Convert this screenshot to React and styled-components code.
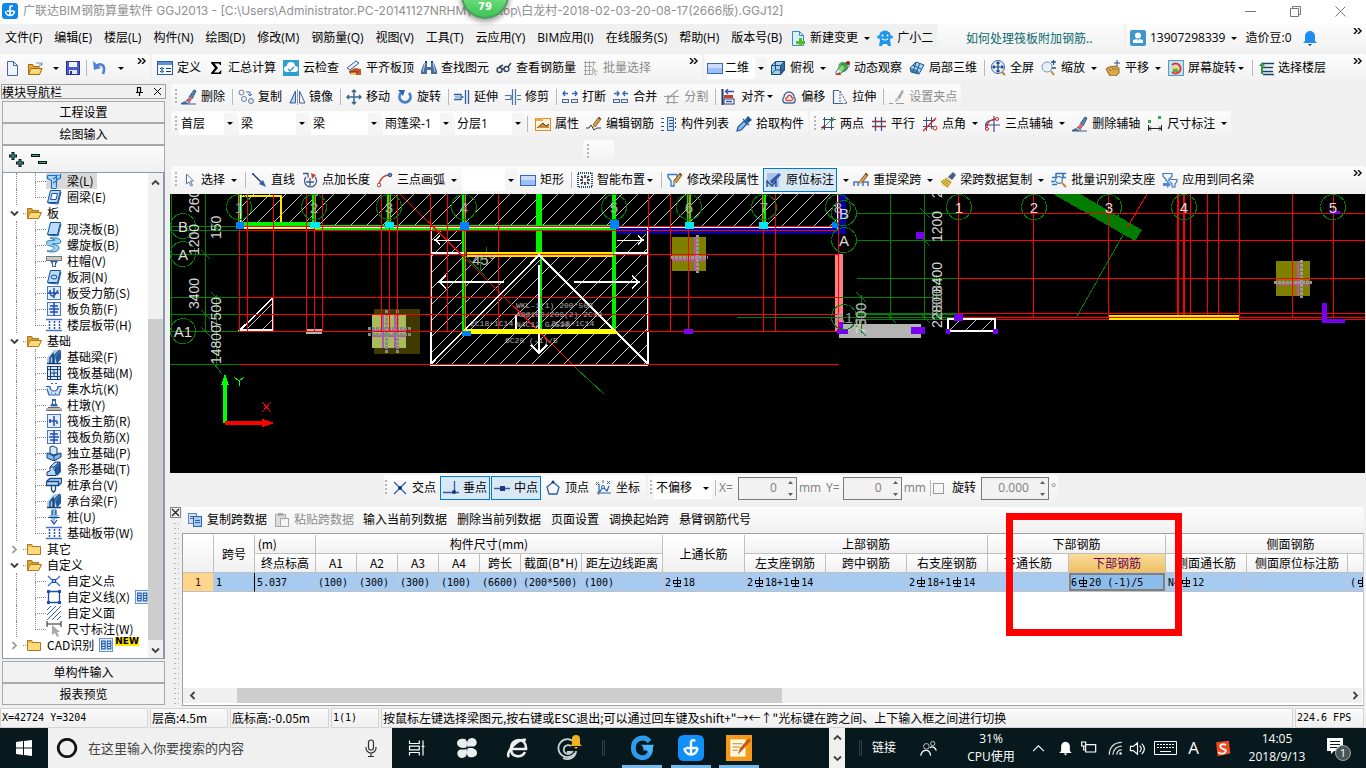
import React from "react";
import styled, { createGlobalStyle, css } from "styled-components";

const UI = `"Open Sans", "Noto Sans CJK SC", sans-serif`;
const TITLE = `Inter, "Noto Sans CJK SC", sans-serif`;
const SONG = `"Noto Sans CJK SC", sans-serif`;
const MONO = `"DejaVu Sans Mono", "Noto Sans CJK SC", monospace`;

const Global = createGlobalStyle`
  * { box-sizing: border-box; }
  body { margin: 0; background: #f0f0f0; color: #000; font: 12px/16px ${UI}; }
  button, input, select { font: inherit; color: inherit; margin: 0; padding: 0; border: 0; background: none; }
  ul { list-style: none; margin: 0; padding: 0; }
  a { color: inherit; text-decoration: none; }
`;

/* ---------- icons ---------- */

const L = (d, c = "#2a4d8f", w = 1, extra = {}) => <path d={d} fill="none" stroke={c} strokeWidth={w} {...extra} />;
const F = (d, c = "#2a4d8f") => <path d={d} fill={c} />;
const R = (x, y, w, h, f, s) => <rect x={x} y={y} width={w} height={h} fill={f} stroke={s} />;
const C = (x, y, r, f, s) => <circle cx={x} cy={y} r={r} fill={f} stroke={s} />;
const brush = (g) => (
  <>
    {F("M8 8l5-7 2 1-4 8z", g ? "#aaa" : "#5b7fb0")}
    {F("M8 8l3 2-2 3-4-1z", g ? "#ccc" : "#e05a6a")}
    {F("M5 11l4 3-3 1-4-1z", g ? "#bbb" : "#dfe6fa")}
    {F("M0 14l4-2 4 3H0z", g ? "#bbb" : "#4a6fa4")}
    {L("M0 15h15M8 8l5-7 2 1-4 8M5 11l4 3", g ? "#999" : "#3c5c86")}
  </>
);
const pencil = <>{F("M7 9l6-8 2 2-6 8-3 1z", "#dca04a")}{F("M12 2l1-1 2 2-1 1z", "#7a4a2a")}{L("M7 9l6-8 2 2-6 8", "#7a5a2a")}</>;
const slab = <>{F("M4 1h11l-3 13H1z", "#b9dcff")}{L("M4.500 1.500h10l-3 12h-10z", "#14509c")}{L("M2 14l10 1 3-12", "#14509c")}</>;
const mesh = (inner) => <>{R(1.5, 1.5, 13, 13, "#e3efff", "#4a74c8")}{L(inner, "#1f4fae", 1.500)}</>;
const beam = <>{F("M1 14V9l7-8h5v8l-5 5z", "#a8cdf2")}{F("M9 8l6-7v9l-4 5z", "#1e5a9c")}{L("M1 14.500h14M4 14V9l3-4v9M8 14V7l6-6", "#123f78", 1.300)}</>;

const ICONS = {
  app: <><rect width="16" height="16" rx="3" fill="#0f86ea" />{L("M8 3v9M3.500 8a4.500 4.500 0 0 0 9 0M5 8h7M8 3h3", "#fff", 1.600)}</>,
  newdoc: <>{F("M3 1h7l4 4v11H3z", "#eef4ff")}{L("M3.500 1.500h6l4 4v10h-10zM9.500 1.500v4h4", "#44689e")}</>,
  open: <>{F("M1 4h5l1 2h6v3H4l-3 6z", "#e8a83a")}{F("M4 8h12l-3 7H1z", "#ffd873")}{L("M4 8.500h11l-2.500 6H1.500zM1.500 14V4.500h4l1 2H12", "#9a6a18")}{L("M9 3h4l2 2M15 2v3h-3", "#6f8fb8")}</>,
  save: <>{R(1.5, 1.5, 13, 13, "#4a5bc8", "#26338f")}{R(4, 2, 8, 5, "#eef1ff")}{R(4, 10, 8, 4, "#dfe4f8")}{R(5, 11, 2, 3, "#26338f")}</>,
  undo: <>{L("M4 6c6-4 10 0 7 8", "#4f7fd6", 2.600)}{F("M1 1l1 9 7-2z", "#4f7fd6")}</>,
  define: <>{R(0.5, 1.5, 15, 13, "#f5f9ff", "#2b5ba8")}{R(1, 2, 14, 3, "#5f8fd8")}{L("M3 8.500h4M3 11.500h4M9 8.500h5M9 11.500h5", "#1d3c70")}{R(4, 7, 2, 6, "#5f8fd8")}</>,
  sigma: F("M3 2h10v3h-1l-1-1.500H6.500L10 8l-4 4.500h5l1.500-2h1L13 14H3v-1l4-5-4-5z", "#000"),
  cloud: <>{R(0, 0, 16, 16, "#2f9fd0")}{F("M4 12a3 3 0 0 1 0-6 4 4 0 0 1 8 0 3 3 0 0 1 0 6z", "#fff")}{L("M5 9l2 2 4-4", "#2f9fd0", 1.500)}</>,
  flush: <>{F("M1 8l9-7 3 2-9 7z", "#e8f0ff")}{L("M1 8l9-7 3 2-9 7z", "#3d5f9a")}{F("M3 11l6-3 6 1v6H5z", "#c2542e")}{F("M5 12h5v3H5z", "#ffc44a")}{L("M3 12h9", "#6b2d14")}</>,
  find: <>{F("M3 3h3v4h4V3h3l3 8v3h-6v-4H6v4H0v-3z", "#4a6e9c")}{L("M4 3l-2 9M12 3l2 9", "#b9cfe8")}{R(4, 1, 2, 2, "#203c60")}{R(10, 1, 2, 2, "#203c60")}</>,
  glasses: <>{L("M1 10a2.500 2.500 0 1 0 5 0 2.500 2.500 0 1 0-5 0M8 9a2.500 2.500 0 1 0 5 0 2.500 2.500 0 1 0-5 0M6 9h2M3 7l4-2M12 7l3-4", "#34425c", 1.400)}</>,
  batchG: <>{L("M1 2.500h12M1 6.500h8M1 10.500h7M1 14.500h9M2.500 1v14M6.500 1v14M10.500 1v5", "#a4a4a4")}{F("M9 6l6 6h-3l2 3-2 1-1-3-2 2z", "#c4c4c4")}</>,
  rect: <>{R(0.5, 3.5, 15, 10, "#9cc0f8", "#3d66b8")}{R(1, 4, 14, 4, "#c9defc")}</>,
  cube: <>{F("M1 5l5-4h9v9l-4 5H1z", "#9fd0ee")}{F("M11 5l4-4v9l-4 5z", "#3f6f9c")}{L("M1.500 5.500h9v9h-9zM1.500 5.500l4-4h9l-4 4M10.500 14.500l4-5v-8M5.500 2v8l-4 4M6 10h9", "#214a78")}</>,
  orbit: <>{C(9, 7, 5, "#3fa84a")}{C(7, 8, 3, "#8edc72")}{L("M2 14C0 11 12 0 15 3s-8 12-13 11", "#406a9c")}{F("M1 15l5-3 1 3z", "#c23a2a")}{C(14, 3, 2, "#a02020")}</>,
  local3d: <>{F("M1 8l6-6 8 3-5 9-8-2z", "#a9d4f4")}{F("M1 8l1 4 8 2-1-4z", "#4d86b8")}{L("M1 8l6-6 8 3-5 9-8-2zM4 5l8 4M7 2l-3 10M11 3L7 13", "#1f568c")}</>,
  full: <>{C(8, 7, 6.5, "#e3eeff", "#3c5f98")}{L("M8 2v10M3 7h10M6.500 3.500L8 2l1.500 1.500M6.500 10.500L8 12l1.500-1.500M4.500 5.500L3 7l1.500 1.500M11.500 5.500L13 7l-1.500 1.500", "#1c3c78", 1.200)}{L("M12 12l3 3", "#c08030", 2)}</>,
  zoom: <>{C(6, 7, 5, "#e8f2ff", "#7c94b8")}{L("M10 11l3 4", "#b98a3c", 2)}{L("M10 2h5M12.500 0v5M11 8h4", "#2b4d90", 1.300)}</>,
  pan: <>{F("M1 9l3-2 7-1 3 2v5l-3 3H5z", "#dca64a")}{L("M1 9l3-2 7-1 3 2v5l-3 3H5zM4 9l2 2M7 8l2 2M10 8l1 2", "#8a6222")}{L("M12 0v6M9 3h6", "#2b4d90")}</>,
  screenrot: <>{R(0.5, 0.5, 15, 15, "#bfe2f4", "#5898c0")}{L("M4 5a5 5 0 1 1 0 7", "#e23b2e", 2)}{R(4, 7, 6, 3, "#f0d43a")}{R(5, 9, 5, 3, "#58b04a")}</>,
  floors: <>{L("M4 3.500h12M3 7.500h12M5 11.500h10M5 14.500h11", "#16466a", 1.600)}{F("M1 6l3-4 3 4H5v8H3V6z", "#37924a")}</>,
  brush: brush(false), brushG: brush(true),
  copy: <>{C(3.500, 3.500, 2.500, "none", "#6a7890")}{C(6, 10, 2.500, "none", "#6a7890")}{C(13, 12, 2.500, "#d8e4f8", "#6a7890")}{L("M8 3h4v3M10 5l2 2 2-2", "#3c66b0")}</>,
  mirror: <>{L("M8.500 0v16", "#8a9cba")}{F("M6 2v12H0z", "#b8cff0")}{L("M6.500 2v12H1zM10.500 2v12H16z", "#3f5f96")}</>,
  move: L("M8 1v14M1 8h14M6 3l2-2 2 2M6 13l2 2 2-2M3 6L1 8l2 2M13 6l2 2-2 2", "#3d6596", 1.500),
  rotate: <>{L("M4 4a5.500 5.500 0 1 0 8 0", "#4a7fd0", 2.800)}{F("M1 1l7 0-2 6z", "#2f62b8")}</>,
  extend: <>{L("M0 5.500h7v5H0M9.500 8h-2M11.500 1v14M14.500 1v14", "#2d5c9c", 1.300)}{L("M1 8h6", "#9db8dc", 2)}</>,
  trim: <>{L("M0 6.500h6v4H0M7.500 0v16M10.500 0v16M12 6.500h4M12 10.500h4", "#4a74a8", 1.200)}</>,
  breakI: <>{L("M1 4.500h5M10 4.500h5M3 2L1 4.500 3 7M13 2l2 2.500L13 7", "#3465b8", 1.300)}{R(0.5, 10.5, 6, 3, "#dfe8f6", "#51688c")}{R(9.500, 10.5, 6, 3, "#dfe8f6", "#51688c")}</>,
  merge: <>{L("M1 4.500h5M10 4.500h5M4 2l2 2.500L4 7M12 2l-2 2.500L12 7", "#3465b8", 1.300)}{R(0.5, 10.5, 6, 3, "#dfe8f6", "#51688c")}{R(8.500, 10.5, 6, 3, "#dfe8f6", "#51688c")}</>,
  splitG: <>{L("M0 7.500h15M2 13.500h12M3 10L14 1M4 6v9M10 6v9", "#9c9c9c", 1.200)}</>,
  align: <>{L("M1.500 0v16", "#20386c", 2)}{R(3, 6, 9, 3, "#c83838")}{R(3, 10, 10, 5, "#fff", "#20386c")}{L("M5 2.500h8M7 0L4.500 2.500 7 5M5 12.500h6", "#2a50a8", 1.300)}</>,
  offset: <>{L("M4 14a3.500 3.500 0 0 1-1-6 5 5 0 0 1 10 0 3.500 3.500 0 0 1-1 6z", "#44699a", 1.400)}{L("M5.500 11.500c-2-2 0-3 1-3 0-3 4-3 4 0 2 0 2 2 0 3z", "#d44a4a", 1.300)}</>,
  stretch: <>{L("M7 1.500H1.500v13H10", "#3f628e", 1.200)}{L("M8 2l7 12.500H9M8 2v12", "#3f628e", 1, { strokeDasharray: "2 1" })}</>,
  gripG: <>{F("M8 9l5-8 2 1-4 8z", "#aaa")}{L("M0 14.500h4M7 14.500h8", "#999")}{F("M7 9l3 2-4 2z", "#bbb")}</>,
  prop: <>{R(0.5, 2.5, 15, 12, "#fff3dc", "#e08a24")}{R(1, 2, 7, 3, "#f2a646")}{F("M3 11l5-4 3 3 3-2v4H5z", "#c68a3a")}{L("M2 12l6-5 3 3 3-2", "#5a3a1a")}</>,
  editbar: <>{pencil}{L("M0 12h3l2-3 3 5 3-2h4", "#333")}</>,
  list: <>{R(6.5, 1.5, 6, 13, "#cfe2fb", "#3c68aa")}{L("M0 2.500h3M0 6.500h3M0 10.500h3M0 14.500h3M8 4.500h4M8 7.500h4M8 10.500h4", "#34517e")}{L("M14.500 2v12", "#34517e", 1, { strokeDasharray: "2 2" })}</>,
  picker: <>{F("M9 4l3-4 4 4-4 3z", "#22569c")}{F("M8 5l3 3-6 6-4 1 1-4z", "#8cc0ee")}{L("M8 5l3 3-6 6-4 1 1-4zM7 3l6 6", "#22569c", 1.200)}</>,
  two: <>{L("M3 3.500h13M1 11.500h13M4.500 1v13M11.500 1v13", "#3c4f78")}{L("M1 14L14 1", "#3c9a4a")}{C(4, 11, 1.5, "#a02020")}{C(12, 4, 1.5, "#2a8a2a")}</>,
  para: <>{L("M1 5.500h14M1 10.500h14", "#a03048", 1.300)}{L("M4.500 1v14M10.500 1v14", "#3c5088", 1.300)}</>,
  angle: <>{L("M1 4.500h12M1 10.500h12M4.500 1v14M9.500 1v12", "#3c5088")}{L("M1 15L14 2", "#d02020", 1.300)}{C(13, 12, 2, "#fff", "#d02020")}</>,
  arcaxis: <>{L("M0 13c0-8 4-9 10-9M9 0v16M1 9h14", "#3c5088", 1.200)}{L("M2 14C1 7 5 3 12 3", "#d02020", 1.200)}{C(2, 13, 1.5, "#fff", "#d02020")}{C(12, 3, 1.5, "#fff", "#d02020")}</>,
  dim: <>{F("M1 4h3v3H1zM11 0h3v3h-3z", "#2eae4a")}{L("M1.500 9v6M14.500 9v6M2 12.500h12M4 10.500l-2 2 2 2M12 10.500l2 2-2 2", "#222")}</>,
  cursor: <>{F("M5 1v12l3-3 2 5 2-1-2-5h4z", "#fff")}{L("M5.500 2v10l2.500-2 2 4 1.500-.5-2-4.500h3z", "#5a7398")}</>,
  line: <>{L("M2 2l10 10", "#233a66", 1.400)}{F("M15 15l-7-3 4-4z", "#2b5fb8")}{C(2, 2, 1, "#233a66")}</>,
  addlen: <>{L("M13 5a6 6 0 1 1-9 0", "#3c5c8c", 1.200)}{L("M8 6v8M4 10h8M1 1.500h5v4", "#3c5c8c", 1.300)}{F("M9 1l5 2-4 4z", "#d04030")}</>,
  arc3: <>{L("M2 14C2 8 6 3 13 3", "#c24a3a", 1.500)}{C(2, 13, 1.8, "#fff", "#b03a2a")}{C(13, 3, 1.8, "#5a90d8", "#244a88")}</>,
  smart: <>{R(1, 1, 14, 14, "#fff")}{L("M1 1h14v14H1z", "#244a78", 2, { strokeDasharray: "1 1" })}{L("M4 4l2 2M12 4l-2 2M4 12l2-2M12 12l-2-2M8 3v3M8 10v3M3 8h3M10 8h3", "#111", 1.400)}</>,
  modseg: <>{L("M1 2.500h9v3L7 9v5H4V9L1 5z", "#2b79c8", 1.300)}{pencil}</>,
  inplace: <>{R(1, 1, 12, 14, "#a8c4ea")}{F("M4 9l2 3 9-9-2-2z", "#2a5cae")}{L("M1 15V9l5 5 4-5v6", "#24487c", 1.300)}</>,
  respan: <>{L("M1 14v-4h14v4M5 14v-4M10 14v-4", "#4f78b8", 1.600)}{pencil}</>,
  copyspan: <>{F("M1 9l6-4 5 5-4 6-6-3z", "#e8cc62")}{L("M1 9l7 6M3 8l6 5M5 7l6 4", "#937820")}{F("M8 5l5-5 3 3-4 5z", "#4f5890")}</>,
  batchid: <>{L("M5 1.500h10M1 5.500h4M11 5.500h4M0 9.500h4M1 12.500h5M5 1v5M12 1v5", "#2a78c0", 1.600)}{C(8, 8, 3.500, "#e8f2ff", "#3e618e")}{L("M11 11l4 4", "#b98a3c", 2)}</>,
  applyto: <>{L("M1 1.500h9v3L7 7v2H4V7L1 4.500zM8 7.500h7v2L13 12v3h-3v-3L8 9.500", "#3a79c4", 1.200)}{F("M1 11h4V9l4 3.500L5 16v-2H1z", "#4f86d8")}</>,
  cross: <>{L("M2 2l12 12M14 2L2 14", "#2a5fa8", 1.300)}{C(8, 8, 2, "#1c3c78")}</>,
  perp: <>{L("M0 12.500h16M11.500 1v12", "#2a5fa8", 1.300)}{C(11, 12, 2, "#1c3c78")}</>,
  mid: <>{L("M0 8.500h16", "#2a5fa8", 1.300)}{R(6, 6, 5, 5, "#1c3c78")}</>,
  vertex: <>{L("M8 2l6 5-2 7H4L2 7z", "#2a5fa8", 1.300)}{C(8, 2, 1.5, "#1c3c78")}</>,
  coord: <>{L("M3 4v9h12M3 13l4-6 4 4 2-5", "#2a5fa8", 1.200)}{L("M0 2l3 3M3 2L0 5M11 1l3 3M14 1l-3 3M7 0v3M1 12l2 3", "#567")}{C(7, 7, 1.500, "#fff", "#2a5fa8")}</>,
  copydoc: <>{R(1.5, 1.5, 8, 10, "#cfe0f8", "#5a86bc")}{R(6.5, 4.5, 8, 10, "#a9c9f0", "#2f64a8")}{L("M8 8.500h5M8 10.500h5M3 4.500h3M3 6.500h3", "#2f64a8")}</>,
  paste: <>{R(1.5, 2.5, 10, 12, "#ddd", "#a8a8a8")}{R(4, 1, 5, 3, "#aaa")}{R(6.5, 6.5, 8, 8, "#f4f4f4", "#a8a8a8")}</>,
  newchg: <>{F("M2 1h8l4 4v11H2z", "#d8f0ff")}{L("M2.500 1.500h7l4 4v10h-11zM9.500 1.500v4h4", "#3e88b8")}{F("M9 8h3v3h3v3h-3v2H9v-2H6v-3h3z", "#58b82a")}</>,
  robot: <>{C(8, 6.500, 6, "#1f97e8")}{F("M3 10h10l1 6h-3l-1-2H6l-1 2H2z", "#1f97e8")}{C(5.500, 5.500, 1, "#fff")}{C(10.500, 5.500, 1, "#fff")}{L("M5 8.500c1 2 5 2 6 0", "#fff", 1.200)}{C(1.500, 7, 1.500, "#1f97e8")}{C(14.500, 7, 1.500, "#1f97e8")}</>,
  user: <><rect width="16" height="16" rx="2" fill="#3e97cc" />{C(8, 5.500, 3, "#fff")}{F("M3 13V10l4-1 1 2 1-2 4 1v3z", "#fff")}</>,
  bellb: <>{F("M8 1a5 5 0 0 1 5 5v5l2 2H1l2-2V6a5 5 0 0 1 5-5z", "#1f8cf0")}{F("M6 14h4l-2 2z", "#123a6a")}</>,
  folder: <>{F("M1 3h5l1 2h8v9H1z", "#e9b84c")}{R(1, 6, 14, 8, "#ffd97c")}{L("M1.500 13.500v-10h4l1 2h8v8z", "#a87a22")}</>,
  folderOpen: <>{F("M1 3h5l1 2h6v3H4l-3 6z", "#dba33c")}{F("M4 7h12l-3 7H1z", "#ffd97c")}{L("M1.500 13.500v-10h4l1 2h6v2M4 7.500h11.500l-3 6h-11z", "#a87a22")}</>,
  liang: <>{F("M1 2l4-1h10v4l-4 1v8l-4 1V7L1 6z", "#a9d6fa")}{L("M1.500 2.500h9l4-1M1.500 2.500v3l4 2v8M10.500 2.500v12M14.500 1v4l-4 2M5.500 15.500h5M7 6l3-2M7 10l3-2", "#1f6fc0", 1.200)}</>,
  ring: <>{slab}{F("M6 4h6l-2 7H4z", "#fff")}{L("M6 4.500h5.500l-1.500 6H4.500z", "#14509c")}</>,
  slab,
  spiral: <>{F("M4 1c8-1 13 2 10 5-3 2-7 0-8 1s7 0 7 4-8 5-12 3c3 0 7-1 7-3S0 9 0 6s5-2 9-3z", "#9fd4f4")}{L("M4 1c8-1 13 2 10 5-3 2-7 0-8 1s7 0 7 4-8 5-12 3c3 0 7-1 7-3S0 9 0 6s5-2 9-3z", "#1f78b8")}</>,
  cap: <>{R(0.5, 3.5, 15, 4, "#c8c8c8", "#777")}{F("M4 8h8l-2 3v3H6v-3z", "#2a62b8")}{R(7, 9, 2, 4, "#fff")}</>,
  hole: <>{slab}{L("M5 8a3 2 0 1 0 6 0 3 2 0 1 0-6 0", "#14509c")}</>,
  rebarS: mesh("M2 8h11M4 5c0 8 4 8 8 0M8 3v10"),
  rebarF: mesh("M4 5h8M4 11h8M8 1v14M3 8h10"),
  strip: <>{L("M0 2.500h16M0 13.500h16", "#4a74c8", 1.500)}{L("M3.500 4v8M8.500 4v8M13.500 4v8", "#1f4fae", 1.500, { strokeDasharray: "2 1" })}</>,
  beam,
  raft: <>{R(1.5, 1.5, 13, 13, "#dbe9ff", "#123f78")}{L("M4.500 1v14M11.500 1v14M1 4.500h14M1 11.500h14M8 5v6M5 8h6", "#123f78")}</>,
  pit: <>{F("M0 6h4v4h8V6h4l-3 8H3z", "#cfe2fb")}{L("M0 5.500h4c0 6 8 6 8 0h4M1 8l2 6h10l2-6M5 2.500h2M9 2.500h2M5 12h1M9 12.500h1", "#2a5fb0", 1.200)}</>,
  pier: <>{F("M0 11h3l2-2h6l2 2h3v3H0z", "#bbb")}{L("M0.500 13.500h15M2 10.500h12", "#666")}{F("M6 2h4v4l2 3H4l2-3z", "#2a62b8")}{R(7, 4, 2, 3, "#fff")}</>,
  mainbar: mesh("M8 3v10M3 8h8M4 6v4M11 8v3"),
  indep: <>{F("M1 8l6-2 8 2v4l-7 4-7-3z", "#8ab8e8")}{F("M4 2l3-1 4 2v6l-4 1-3-2z", "#d4e8fc")}{L("M1 8l7 3 7-3M8 11v5M1 8v5l7 3 7-4V8M4 2v6l3 2 4-1V3L7 1z", "#123f78")}</>,
  stripf: <>{F("M1 15v-4l3-1V6l5-5h5l1 9-5 5z", "#b4d6f4")}{F("M9 6l5-5 1 10-4 4-2-4z", "#1e5a9c")}{L("M1 14.500h9v-4L8 9V6H4v4l-3 1zM4 6l5-5h5v9M8 6l5-5", "#123f78")}</>,
  cap2: <>{F("M0 5l3-3h12v4l-2 3H0z", "#b4d6f4")}{L("M0.500 4.500h12v4H.5zM1 4l3-2.500h11.500v4l-3 3M5.500 9v4l2 2.500 2-2.500V9", "#174b8c", 1.300)}</>,
  pile: <>{F("M6 0h4v6h3l-2 4H9l-1 5-2-5H5L3 6h3z", "#8ab8e8")}{L("M6 1v5M10 1v5M2 8.500h12M5 11l3 4 3-4", "#174b8c", 1.200)}</>,
  point: <>{L("M2 3l4 4M14 3l-4 4M2 13l4-4M14 13l-4-4", "#3a70c0", 1.300)}{R(6.500, 6.500, 3, 3, "#9ac6ee", "#1f4fae")}</>,
  cline: <>{L("M2.500 2.500h11v11h-11z", "#1f4fae", 1.300)}{R(1, 1, 3, 3, "#1f4fae")}{R(12, 1, 3, 3, "#1f4fae")}{R(1, 12, 3, 3, "#1f4fae")}{R(12, 12, 3, 3, "#1f4fae")}</>,
  cface: L("M1 5l4-4M1 10l9-9M1 15L15 1M6 15l9-9M11 15l4-4", "#2a5fc0"),
  dimcur: <>{L("M1 0v6M15 0v6M1 3h14", "#222")}{F("M6 4v10l3-2 2 4 2-1-2-4h3z", "#a8a8a8")}</>,
  pages: <>{R(0.5, 0.5, 15, 15, "#e4f0fc", "#5a86bc")}{L("M3 3.500h4v9h-4zM9.500 3.500h4v9h-4zM3 6.500h4M9.500 6.500h4M3 9.500h4M9.500 9.500h4", "#1f5fb0", 1.300)}</>,
};

const Svg = styled.svg`display: block; flex: none;`;
const Icon = ({ n, s = 16 }) => <Svg width={s} height={s} viewBox="0 0 16 16" aria-hidden="true">{ICONS[n]}</Svg>;

const ArrowBox = styled.span`
  flex: none; width: ${(p) => (p.$tight ? 9 : 13)}px; padding-left: ${(p) => (p.$tight ? 2 : 6)}px;
`;
const Tri = () => <Svg width="6" height="3" viewBox="0 0 6 3"><path d="M0 0h6L3 3z" /></Svg>;
const Arrow = ({ tight }) => <ArrowBox $tight={tight}><Tri /></ArrowBox>;
const More = styled.button`align-self: flex-start; margin-left: auto; padding: 4px 4px 0 0; height: 10px;`;
const Chevrons = () => (
  <More aria-label="更多"><Svg width="9" height="6" viewBox="0 0 9 6">{L("M1 0l3 3-3 3M5 0l3 3-3 3", "#000", 1.400)}</Svg></More>
);

/* ---------- toolbars ---------- */

const Bar = styled.div`
  display: flex; height: ${(p) => p.$h || 28}px; margin-bottom: ${(p) => p.$mb ?? 2}px; flex: none; gap: 2px;
  padding-left: ${(p) => p.$pl || 0}px;
`;
const Group = styled.div`
  display: flex; align-items: center; min-width: 0; padding: 0 ${(p) => p.$pr ?? 0}px 0 ${(p) => p.$pl ?? 4}px;
  background: linear-gradient(#fcfcfc, #f1f1f1); border-radius: 3px; overflow: hidden;
  flex: ${(p) => (p.$grow ? "1 1 0" : "none")}; white-space: nowrap;
  width: ${(p) => (p.$w ? p.$w + "px" : "auto")};
`;
const Grip = styled.span`
  flex: none; width: 2px; height: 16px; margin-right: ${(p) => p.$mr ?? 5}px;
  background: repeating-linear-gradient(#b4b4b4 0 2px, transparent 2px 4px);
`;
const Sep = styled.span`flex: none; width: 1px; height: 16px; background: #b8b8b8; margin-right: ${(p) => p.$mr ?? 5}px;`;
const ToolBtn = styled.button`
  display: flex; align-items: center; flex: none; height: 22px; margin-right: ${(p) => p.$mr ?? 7}px; white-space: nowrap;
  & > svg + span { margin-left: 4px; }
  ${(p) => p.disabled && css`color: #8c8c8c;`}
  ${(p) => p.$on && css`
    height: 24px; padding: 0 2px; border: 1px solid #0078d7; background: #d9e8f5; margin-left: -3px; margin-right: ${p.$mr ?? 1}px;
  `}
`;
const Tool = ({ i, t, menu, tight, ...rest }) => (
  <ToolBtn {...rest}>
    {i && <Icon n={i} />}
    {t && <span>{t}</span>}
    {menu && <Arrow tight={tight} />}
  </ToolBtn>
);

const ComboBox = styled.label`
  display: flex; align-items: center; flex: none; height: 22px; width: ${(p) => p.$w}px; margin-right: 3px; background: #fff;
`;
const Select = styled.select`
  appearance: none; flex: 1; min-width: 0; height: 20px; padding-left: 2px; outline: 0;
`;
const DropPart = styled.span`
  display: grid; place-items: center; flex: none; width: 12px; height: 22px; background: ${(p) => (p.$plain ? "#fff" : "#f4f4f4")};
`;
const Combo = ({ v, w, name, plain, icon }) => (
  <ComboBox $w={w}>
    {icon && <Icon n={icon} />}
    <Select aria-label={name} defaultValue={v}><option>{v}</option></Select>
    <DropPart $plain={plain}><Tri /></DropPart>
  </ComboBox>
);

/* ---------- title and menus ---------- */

const Page = styled.div`display: flex; flex-direction: column; min-height: 100vh; overflow: hidden;`;
const TitleBar = styled.header`
  position: relative; display: flex; align-items: center; height: 24px; flex: none; padding: 0 20px 2px 2px;
  background: #fff; color: #8f8f8f; white-space: nowrap; gap: 5px;
`;
const Title = styled.span`flex: 1; min-width: 0; overflow: hidden; font-family: ${TITLE};`;
const Ball = styled.div`
  position: absolute; left: 461px; top: -29px; width: 48px; height: 48px; border-radius: 50%; z-index: 2;
  background: linear-gradient(#6fdc7c 55%, #3cc456); border: 2px solid #4f9a5c; box-shadow: 0 2px 6px #0007;
  color: #fff; font: bold 10px/12px "DejaVu Sans", sans-serif; text-align: center; padding-top: 28px;
`;
const WinBtns = styled.div`display: flex; gap: 34px;`;
const MenuItems = styled.nav`display: flex; align-items: center; flex: none; width: 935px; padding-left: 5px; white-space: nowrap;`;
const MenuBtn = styled.button`flex: none; margin-right: ${(p) => (p.$last ? 8 : 12)}px;`;
const Tip = styled.a`display: block; padding-left: 28px; color: #0a6a6c; font-family: ${SONG};`;

const MENUS = ["文件(F)", "编辑(E)", "楼层(L)", "构件(N)", "绘图(D)", "修改(M)", "钢筋量(Q)", "视图(V)", "工具(T)", "云应用(Y)", "BIM应用(I)", "在线服务(S)", "帮助(H)", "版本号(B)"];

/* ---------- left navigation ---------- */

const Body = styled.div`display: flex; flex: 1; min-height: 0;`;
const Nav = styled.aside`display: flex; flex-direction: column; width: 167px; flex: none; padding: 0 1px 3px; font-family: ${SONG};`;
const NavHead = styled.div`
  display: flex; align-items: center; height: 15px; border: 1px solid #a0a0a0; margin-bottom: 2px; line-height: 13px;
  & > span { flex: 1; }
  svg { margin-right: 3px; }
  svg + svg { margin-left: 6px; }
`;
const NavBtn = styled.button`
  height: 22px; margin: 0 0 0 1px; width: 163px; border: 1px solid #a8a8a8; background: #f2f2f2; flex: none; line-height: 18px;
`;
const NavTools = styled.div`
  display: flex; align-items: center; gap: 6px; height: 27px; margin: 0 0 0 1px; width: 163px; padding-left: 5px; flex: none;
  border: 1px solid #a8a8a8; border-bottom: 0; background: linear-gradient(#fcfcfc, #f0f0f0);
`;
const TreeBox = styled.div`
  display: flex; flex: 1; margin: 0 0 2px 1px; width: 163px; border: 1px solid #8c98a8; border-right-width: 2px; background: #fff; overflow: hidden;
`;
const TreeList = styled.ul`flex: 1; min-width: 0;`;
const Row = styled.li`
  display: flex; align-items: center; height: 16px; white-space: nowrap; overflow: hidden;
  padding-left: ${(p) => (p.$child ? 13 : 7)}px;
`;
const Trunk = styled.span`flex: none; width: 19px; height: 16px; border-left: 1px dotted #888;`;
const Branch = styled.span`
  flex: none; width: 11px; height: 16px;
  &::before { content: ""; display: block; height: 8px; border-left: 1px dotted #888; border-bottom: 1px dotted #888; }
  &::after { content: ""; display: ${(p) => (p.$last ? "none" : "block")}; height: 8px; border-left: 1px dotted #888; }
`;
const Dash = styled.span`flex: none; width: 3px; margin-left: 4px; border-top: 1px dotted #888;`;
const NodeBtn = styled.button`
  display: flex; align-items: center; gap: 5px; height: 16px; padding-right: 3px; line-height: 16px;
  background: ${(p) => (p.$sel ? "#d9d9d9" : "none")};
`;
const NewTag = styled.b`margin-left: -3px; font: bold 9px/9px "DejaVu Sans", sans-serif; background: #ffe600; align-self: flex-start;`;
const VScroll = styled.div`
  display: flex; flex-direction: column; align-items: center; justify-content: space-between; width: 15px; flex: none; padding: 5px 0 3px;
  background: linear-gradient(transparent 146px, #cdcdcd 146px, #cdcdcd calc(100% - 18px), transparent 0) #f0f0f0;
`;

const TREE = [
  ["c", "liang", "梁(L)", { sel: 1 }], ["c", "ring", "圈梁(E)", { last: 1 }],
  ["f", "folderOpen", "板"],
  ["c", "slab", "现浇板(B)"], ["c", "spiral", "螺旋板(B)"], ["c", "cap", "柱帽(V)"], ["c", "hole", "板洞(N)"],
  ["c", "rebarS", "板受力筋(S)"], ["c", "rebarF", "板负筋(F)"], ["c", "strip", "楼层板带(H)", { last: 1 }],
  ["f", "folderOpen", "基础"],
  ["c", "beam", "基础梁(F)"], ["c", "raft", "筏板基础(M)"], ["c", "pit", "集水坑(K)"], ["c", "pier", "柱墩(Y)"],
  ["c", "mainbar", "筏板主筋(R)"], ["c", "rebarF", "筏板负筋(X)"], ["c", "indep", "独立基础(P)"], ["c", "stripf", "条形基础(T)"],
  ["c", "cap2", "桩承台(V)"], ["c", "beam", "承台梁(F)"], ["c", "pile", "桩(U)"], ["c", "strip", "基础板带(W)", { last: 1 }],
  ["f", "folder", "其它", { closed: 1 }],
  ["f", "folderOpen", "自定义"],
  ["c", "point", "自定义点"], ["c", "cline", "自定义线(X)", { pages: 1 }], ["c", "cface", "自定义面"], ["c", "dimcur", "尺寸标注(W)", { last: 1 }],
  ["f", "folder", "CAD识别", { closed: 1, pages: 1, isNew: 1 }],
];

const Chevron = ({ d, c = "#404040" }) => <Svg width="9" height="9" viewBox="0 0 9 9">{L(d, c, 1.800)}</Svg>;
const UP = "M1 6.500l3.500-3.500L8 6.500", DOWN = "M1 2.500L4.500 6 8 2.500", LEFT = "M6.500 1L3 4.500 6.500 8", RIGHT = "M2.500 1L6 4.500 2.500 8";

const TreeRow = ({ row: [kind, icon, label, o = {}] }) => (
  <Row $child={kind === "c"}>
    {kind === "c" ? <><Trunk /><Branch $last={o.last} /></> : <><Chevron d={o.closed ? RIGHT : DOWN} c={o.closed ? "#a0a0a0" : "#404040"} /><Dash /></>}
    <NodeBtn $sel={o.sel}>
      <Icon n={icon} /><span>{label}</span>
      {o.pages && <Icon n="pages" s={14} />}
      {o.isNew && <NewTag>NEW</NewTag>}
    </NodeBtn>
  </Row>
);

/* ---------- drawing area ---------- */

const Work = styled.main`display: flex; flex-direction: column; flex: 1; min-width: 0; padding-left: 3px;`;
const Canvas = styled.div`flex: 1 0 279px; background: #000; overflow: hidden; margin: 0 1px 2px 0; svg { display: block; }`;

const Lines = ({ c, w = 1, d }) => <path d={d} stroke={c} strokeWidth={w} fill="none" />;
const vs = (xs, a, b) => xs.map((x) => `M${x} ${a}V${b}`).join("");
const hs = (ys, a, b) => ys.map((y) => `M${a} ${y}H${b}`).join("");
const Axis = ({ x, y, t, c = "#ddd" }) => (
  <g>
    <circle cx={x} cy={y} r="12.500" fill="none" stroke="#008000" strokeDasharray="7 1" />
    <text x={x} y={y + 6} textAnchor="middle" fontSize="15" fill={c}>{t}</text>
  </g>
);
const Vert = ({ x, y, t, c = "#d8d8d8" }) => <text transform={`translate(${x} ${y}) rotate(-90)`} fontSize="14" fill={c}>{t}</text>;

const Drawing = () => (
  <svg width="1195" height="279" viewBox="170 194 1195 279" fontFamily="Liberation Sans, sans-serif" shapeRendering="crispEdges">
    <defs>
      <pattern id="hatch" width="16" height="16" patternUnits="userSpaceOnUse">
        <path d="M0 16L16 0" stroke="#c4c4c4" strokeWidth="1" />
      </pattern>
    </defs>
    <rect x="240" y="194" width="599" height="32" fill="url(#hatch)" />
    <path d="M431 228H648V364H431zM464 230V254H614V230z" fillRule="evenodd" fill="url(#hatch)" />
    <path d="M240 330L273 297.500V330z" fill="url(#hatch)" stroke="#fff" strokeWidth="1.500" />

    <Lines c="#008000" d={hs([226.5, 230.5, 254.5, 297.5, 314.5, 331.5, 364.5], 170, 240) + vs([171.5], 194, 331) + vs([205.5], 194, 331)} />
    <Lines c="#008000" d="M201 250l9 9M201 310l9 9M201 327l9 9M211 292l11 11M211 360l11 14M210 222l11 10M216 295V366" />
    <rect x="615" y="226" width="231" height="8" fill="#0000a0" />
    <rect x="838" y="194" width="8" height="40" fill="#0000a0" />
    <Lines c="#00f000" w="4" d={vs([240, 314, 389, 689, 764], 194, 226) + vs([464, 614], 194, 331)} />
    <Lines c="#00f000" w="6" d={vs([539], 194, 254)} />
    <Lines c="#00f000" w="2" d={hs([226, 229], 314, 614) + vs([541], 254, 331)} />
    <rect x="240" y="222" width="74" height="4" fill="#00f000" />
    <Lines c="#ffe800" w="2" d="M241 196H281V222M241 228H320" />
    <Lines c="#fff" d="M240 227.500H839M240.500 194V226M314.500 194V226" />
    <Lines c="#fff" w="2" d="M431 228V365M648 228V365M430 253H464M614 253H648M838 194V230" />
    <rect x="835" y="254" width="8" height="77" fill="#ff8080" />
    <rect x="839" y="324" width="82" height="14" fill="#b4b4b4" />
    <rect x="306" y="329" width="16" height="5" fill="#b4b4b4" />

    <rect x="374" y="309" width="46" height="45" fill="#403a00" />
    <rect x="372" y="315" width="34" height="33" fill="#a8bc5c" />
    <Lines c="#b058b0" w="2" d="M383 315V348M395 315V348M372 331H406M372 336H406" />
    <path d="M386 310V353M397 310V353M368 328H411M368 334H411" stroke="#888" strokeWidth="3" strokeDasharray="3 1" fill="none" />
    <rect x="672" y="237" width="34" height="34" fill="#808000" />
    <Lines c="#c050b0" w="2" d="M695 237V271M672 260H706" />
    <path d="M697 235V273M671 257H708" stroke="#999" strokeWidth="3" strokeDasharray="3 1" fill="none" />
    <rect x="1276" y="261" width="34" height="35" fill="#808000" />
    <Lines c="#c050b0" w="2" d="M1298 261V296M1276 284H1310" />
    <path d="M1301 260V298M1274 282H1312" stroke="#999" strokeWidth="3" strokeDasharray="3 1" fill="none" />

    <Lines c="#008000" d={hs([213.5, 240.5], 857, 959) + hs([278.5], 857, 959) + hs([297.5], 839, 935) + hs([313.5, 314.5], 855, 959) + hs([317.5], 737, 959) + hs([319.5], 855, 959) + vs([890.5, 924.5], 194, 320) + vs([861.5], 295, 333) + vs([936.5], 275, 320)} />
    <Lines c="#008000" d="M920 208l10 10M920 236l10 10M886 313l10 10M920 313l10 10M856 292l10 10M856 326l10 10M932 275l10 10" />
    <polygon points="1053,194 1080,194 1142,230 1135,241" fill="#007c00" />

    <Lines c="#f00" d={hs([226.5, 230.5, 254.5, 297.5, 314.5, 331.5, 364.5], 239, 839)} />
    <Lines c="#f00" d={vs([239.5, 247.5, 273.5, 306.5, 314.5, 322.5, 381.5, 389.5, 397.5, 430.5, 447.5, 464.5, 498.5, 648.5, 670.5, 688.5, 763.5, 775.5, 838.5], 194, 331)} />
    <Lines c="#f00" d={hs([213.5, 240.5, 278.5, 313.5, 317.5, 319.5], 958, 1365)} />
    <Lines c="#f00" d={vs([958.5, 1033.5, 1108.5, 1190.5, 1207.5, 1218.5, 1239.5, 1292.5, 1333.5], 194, 318)} />
    <Lines c="#f00" w="2" d={vs([1178, 1184], 194, 318)} />

    <Lines c="#f00" d="M400 194L577 369M1147 194L1127 228" />
    <Lines c="#008000" d="M577 369L604 394M464 254L485 276M486 247V262M480 270V255M1127 228L1076 318" />
    <Lines c="#ffe800" w="2" d={hs([253, 256], 467, 613) + hs([316, 319], 1109, 1239)} />
    <Lines c="#f00" d={hs([254.5], 464, 614) + hs([317.5], 1109, 1239)} />
    <Lines c="#fff" w="1.500" d="M431 364L539 255L648 364" />
    <Lines c="#fff" w="2" d="M539 265V352" />
    <Lines c="#fff" w="1.500" d="M435 240.500H461M440 236l-5 4 5 4M617 240.500H643M638 236l5 4-5 4M439 282H504M446 276l-7 6 7 6M574 282H639M632 276l7 6-7 6M531 345l8 8 8-8M516 315V329" />
    <Lines c="#fff" d="M430 365.500H648" />

    <g fontFamily="Liberation Mono, monospace" fontSize="8" fill="#b0b0b0">
      <text x="516" y="308">WKL-1(1) 200*500</text>
      <text x="516" y="317">A8@100/200(2) 2C18</text>
      <text x="516" y="327">N4C12 G/G10</text>
      <text x="470" y="326">2C18+1C14</text>
      <text x="551" y="326">2C18+1C14</text>
      <text x="505" y="343">6C20 (-1)/5</text>
    </g>
    <text x="472" y="265" fontSize="15" fill="#bbb">45°</text>
    <path d="M464 329H614L618 334H460z" fill="#ff0" />
    <Lines c="#fff" w="2" d="M948 319H995V331H948z" />
    <rect x="949" y="320" width="45" height="10" fill="url(#hatch)" />

    <g fill="#0080ff">
      <rect x="236" y="222" width="8" height="7" /><rect x="460" y="222" width="9" height="8" /><rect x="610" y="220" width="9" height="9" />
      <rect x="462" y="331" width="9" height="5" /><rect x="832" y="222" width="6" height="6" />
    </g>
    <g fill="#00e8f0">
      <rect x="310" y="222" width="10" height="6" /><rect x="385" y="222" width="9" height="6" /><rect x="685" y="222" width="9" height="7" /><rect x="759" y="222" width="9" height="7" />
    </g>
    <g fill="#7800f0">
      <rect x="684" y="329" width="9" height="5" /><rect x="837" y="329" width="11" height="5" /><rect x="911" y="327" width="14" height="7" />
      <rect x="916" y="232" width="8" height="7" /><rect x="954" y="314" width="9" height="7" /><rect x="946" y="329" width="4" height="5" />
      <rect x="993" y="329" width="5" height="5" /><rect x="1322" y="303" width="5" height="20" /><rect x="1322" y="319" width="23" height="4" />
      <rect x="1330" y="211" width="10" height="3" /><rect x="839" y="322" width="4" height="10" />
    </g>

    <Axis x={183} y={226} t="B" /><Axis x={183} y={254} t="A" /><Axis x={183} y={331} t="A1" />
    <Axis x={239} y={207} t="1" c="#a090a8" /><Axis x={314} y={207} t="2" c="#aaa" /><Axis x={389} y={207} t="3" c="#aaa" />
    <Axis x={464} y={207} t="4" c="#aaa" /><Axis x={614} y={207} t="5" c="#aaa" /><Axis x={689} y={207} t="6" c="#aaa" />
    <Axis x={764} y={207} t="7" c="#aaa" /><Axis x={838} y={207} t="8" c="#aaa" /><Axis x={844} y={213} t="B" />
    <Axis x={844} y={240} t="A" /><Axis x={844} y={317} t="A1" c="#8a9a9a" />
    <Axis x={959} y={207} t="1" /><Axis x={1034} y={207} t="2" /><Axis x={1109} y={207} t="3" /><Axis x={1184} y={207} t="4" /><Axis x={1333} y={207} t="5" />
    <Vert x={199} y={213} t="2600" /><Vert x={199} y={255} t="1200" /><Vert x={199} y={309} t="3400" />
    <Vert x={221} y={239} t="150" /><Vert x={221} y={364} t="14800" /><Vert x={221} y={328} t="7500" />
    <Vert x={866} y={334} t="7500" /><Vert x={866} y={326} t="300" c="#999" />
    <Vert x={942} y={242} t="1200" /><Vert x={942} y={198} t="2600" /><Vert x={942} y={293} t="3400" /><Vert x={942} y={328} t="22800" />
    <Vert x={942} y={317} t="3300" c="#999" />

    <g>
      <rect x="223" y="384" width="4" height="39" fill="#0f0" /><path d="M221 385L225 374L229 385z" fill="#0f0" />
      <rect x="225" y="421" width="38" height="4" fill="#f00" /><path d="M262 419L274 423L262 427z" fill="#f00" />
      <Lines c="#0f0" d="M234 377l5 4 5-4M239 381v5" /><Lines c="#f00" d="M262 402l9 10M271 402l-9 10" />
    </g>
  </svg>
);

/* ---------- snap bar ---------- */

const Muted = styled.span`color: #808080; flex: none; margin-right: ${(p) => p.$mr}px;`;
const SpinWrap = styled.label`
  display: flex; align-items: center; flex: none; width: ${(p) => p.$w}px; height: 23px; margin-right: 2px; padding-right: 3px;
  border: 1px solid #7a7a7a; color: #808080; background: #f2f2f2;
`;
const SpinInput = styled.input`flex: 1; min-width: 0; text-align: right; padding-right: 11px; outline: 0;`;
const Spin = ({ v, w, name }) => (
  <SpinWrap $w={w}>
    <SpinInput aria-label={name} defaultValue={v} />
    <Svg width="5" height="15" viewBox="0 0 5 15"><path d="M0 3h5L2.500 0zM0 12h5L2.500 15z" fill="#606060" /></Svg>
  </SpinWrap>
);
const CheckLabel = styled.label`
  display: flex; align-items: center; flex: none; margin-right: 5px; gap: 8px;
  input { appearance: none; width: 11px; height: 11px; flex: none; border: 1px solid #999; }
`;

/* ---------- span table ---------- */

const Panel = styled.section`position: relative; display: flex; height: 199px; flex: none; margin-bottom: 2px; margin-right: 2px;`;
const Gutter = styled.div`
  width: 12px; flex: none; display: flex; flex-direction: column; align-items: center; padding-right: 1px;
  &::after { content: ""; flex: 1; width: 6px; margin-top: 3px;
    background: radial-gradient(circle, #b4b4b4 1px, transparent 1px) 0 0 / 4px 5px; }
`;
const PanelMain = styled.div`flex: 1; min-width: 0; display: flex; flex-direction: column;`;
const Sheet = styled.div`
  flex: 1; display: flex; flex-direction: column; justify-content: space-between; overflow: hidden;
  border: 1px solid #a0a0a0; border-right-color: #c8c8c8; background: #fff; padding: 1px 0 2px;
`;
const Grid = styled.table`
  table-layout: fixed; width: 1233px; border-collapse: separate; border-spacing: 0; font-family: ${SONG}; line-height: 16px; white-space: nowrap;
`;
const Th = styled.th`
  height: 19px; padding: 0; font-weight: normal; text-align: ${(p) => p.$align || "center"}; overflow: hidden;
  border-right: 1px solid #c0c0c0; border-bottom: 1px solid #c0c0c0;
  background: ${(p) => (p.$on ? "linear-gradient(#f9dc9c, #f0c064)" : "linear-gradient(#fff, #f0f0f0)")};
  color: ${(p) => (p.$on ? "#6a0050" : "#000")};
`;
const Td = styled.td`
  height: 19px; padding: 1px 0 0 2px; background: #a6caf0; overflow: hidden;
  border-right: 1px solid ${(p) => (p.$edge ? "#000" : "#c0c8d0")}; border-bottom: 1px solid #c0c0c0;
  font: 10px/16px ${MONO};
`;
const IdxTd = styled(Td)`background: #ffd58c; text-align: center; color: #500030; padding: 1px 0 0;`;
const ActiveTd = styled(Td)`background: #8cbcec; box-shadow: inset 0 0 0 2px #808080;`;
const Steel = styled.svg`width: 12px; height: 11px; vertical-align: -2px;`;
const Phi = () => <Steel viewBox="0 0 12 11" role="img" aria-label="Φ" shapeRendering="crispEdges">{L("M2.500 3.500h7v3h-7zM6.500 0v10M3 9.500h7", "#000")}</Steel>;
const Bars = ({ parts }) => parts.map((p, i) => <React.Fragment key={i}>{i > 0 && <Phi />}{p}</React.Fragment>);
const HScroll = styled.div`display: flex; align-items: center; height: 15px; background: #f0f0f0; padding: 0 2px 0 5px; margin-right: 1px;`;
const Thumb = styled.span`height: 15px; width: calc(47% - 6px); margin: 0 auto 0 40px; background: #cdcdcd;`;
const RedBox = styled.div`position: absolute; left: 836px; top: 6px; width: 176px; height: 123px; border: 7px solid #f00; pointer-events: none;`;

const WIDTHS = [31, 41, 61, 41, 41, 41, 41, 41, 61, 81, 82, 81, 81, 81, 81, 97, 81, 101, 68];
const SUBS = ["终点标高", "A1", "A2", "A3", "A4", "跨长", "截面(B*H)", "距左边线距离"];
const SUBS2 = ["左支座钢筋", "跨中钢筋", "右支座钢筋", "下通长筋", "下部钢筋", "侧面通长筋", "侧面原位标注筋", ""];

const SpanTable = () => (
  <Grid>
    <colgroup>{WIDTHS.map((w, i) => <col key={i} style={{ width: w }} />)}</colgroup>
    <thead>
      <tr>
        <Th rowSpan={2} /><Th rowSpan={2}>跨号</Th><Th $align="left">&nbsp;(m)</Th><Th colSpan={7}>构件尺寸(mm)</Th>
        <Th rowSpan={2}>上通长筋</Th><Th colSpan={3}>上部钢筋</Th><Th colSpan={2}>下部钢筋</Th><Th colSpan={3}>侧面钢筋</Th>
      </tr>
      <tr>{[...SUBS, ...SUBS2].map((s, i) => <Th key={i} $on={s === "下部钢筋"}>{s}</Th>)}</tr>
    </thead>
    <tbody>
      <tr>
        <IdxTd>1</IdxTd><Td $edge>1</Td>
        {["5.037", "(100)", "(300)", "(300)", "(100)", "(6600)", "(200*500)", "(100)"].map((v, i) => <Td key={i}>{v}</Td>)}
        <Td><Bars parts={["2", "18"]} /></Td><Td><Bars parts={["2", "18+1", "14"]} /></Td><Td /><Td><Bars parts={["2", "18+1", "14"]} /></Td>
        <Td /><ActiveTd><Bars parts={["6", "20 (-1)/5"]} /></ActiveTd><Td><Bars parts={["N4", "12"]} /></Td><Td /><Td><Bars parts={["(", ""]} /></Td>
      </tr>
    </tbody>
  </Grid>
);

/* ---------- status and task bars ---------- */

const Status = styled.footer`display: flex; gap: 2px; height: 20px; flex: none; padding-right: 2px; font-family: ${SONG};`;
const Cell = styled.span`
  width: ${(p) => (p.$w ? p.$w + "px" : "auto")}; flex: ${(p) => (p.$w ? "none" : "1 1 0")}; min-width: 0; overflow: hidden; white-space: nowrap;
  border: 1px solid #d4d4d4; background: linear-gradient(#fafafa, #f0f0f0); line-height: 18px; padding-left: 1px;
  ${(p) => p.$mono && css`font-family: ${MONO}; font-size: 10px;`}
`;
const TaskBar = styled.footer`display: flex; align-items: center; height: 40px; flex: none; background: #07191d; color: #fff;`;
const TaskBtn = styled.button`
  display: grid; place-items: center; flex: none; width: ${(p) => p.$w}px; height: 40px; margin-left: ${(p) => p.$ml || 0}px;
  ${(p) => p.$run && css`border-bottom: 3px solid #76b9ed; padding-top: 3px;`}
`;
const Search = styled.label`
  display: flex; align-items: center; width: 344px; height: 40px; flex: none; background: #f0f0f0; color: #444; padding: 0 14px 0 8px; gap: 10px;
  input { flex: 1; min-width: 0; outline: 0; font-size: 13px; }
  input::placeholder { color: #444; opacity: 1; }
`;
const Pager = styled.div`
  display: flex; flex-direction: column; justify-content: space-between; align-items: center; width: 16px; height: 40px; padding: 5px 0;
  background: #f0f0f0; flex: none; margin-left: auto; 
`;
const Rule = styled.span`width: 3px; height: 16px; flex: none; border: 1px solid #2e4448; border-width: 0 1px; margin-left: ${(p) => p.$ml}px;`;
const Tray = styled.div`display: flex; align-items: center; flex: none;`;
const Stack = styled.span`flex: none; width: ${(p) => p.$w}px; margin-left: ${(p) => p.$ml}px; text-align: center; line-height: 18px; white-space: nowrap;`;
const Slot = styled.button`display: grid; place-items: center; flex: none; width: ${(p) => p.$w || 24}px; height: 40px; font-size: 17px;`;
const T = ({ w = 16, h = w, children, vb = "0 0 24 24" }) => <Svg width={w} height={h} viewBox={vb}>{children}</Svg>;

export default function App() {
  return (
    <Page>
      <Global />
      <TitleBar>
        <Icon n="app" />
        <Title>广联达BIM钢筋算量软件 GGJ2013 - [C:\Users\Administrator.PC-20141127NRHM\Desktop\白龙村-2018-02-03-20-08-17(2666版).GGJ12]</Title>
        <Ball>79</Ball>
        <WinBtns>
          <button aria-label="最小化"><T w={11} vb="0 0 11 11">{L("M0 5.500h11", "#777")}</T></button>
          <button aria-label="还原"><T w={11} vb="0 0 11 11">{L("M.5 2.500h8v8h-8zM2.500 2.500v-2h8v8h-2", "#777")}</T></button>
          <button aria-label="关闭"><T w={11} vb="0 0 11 11">{L("M.5.5l10 10M10.500.5l-10 10", "#777")}</T></button>
        </WinBtns>
      </TitleBar>

      <Bar>
        <MenuItems>
          {MENUS.map((m, i) => <MenuBtn key={m} $last={i === MENUS.length - 1}>{m}</MenuBtn>)}
          <Tool i="newchg" t="新建变更" menu $mr={6} />
          <Tool i="robot" t="广小二" />
        </MenuItems>
        <Group $w={187} $pl={1}><Tip href="#tip">如何处理筏板附加钢筋..</Tip></Group>
        <Group $grow>
          <Tool i="user" t="13907298339" menu />
          <ToolBtn $mr={10}>造价豆:0</ToolBtn>
          <Icon n="bellb" />
          <Chevrons />
        </Group>
      </Bar>

      <Bar>
        <Group $w={150}>
          <Tool i="newdoc" /><Tool i="open" menu $mr={5} /><Tool i="save" $mr={5} /><Sep />
          <Tool i="undo" menu /><Chevrons />
        </Group>
        <Group $w={550} $pl={5}>
          <Tool i="define" t="定义" /><Tool i="sigma" t="汇总计算" /><Tool i="cloud" t="云检查" /><Tool i="flush" t="平齐板顶" />
          <Tool i="find" t="查找图元" /><Tool i="glasses" t="查看钢筋量" /><Tool i="batchG" t="批量选择" disabled /><Chevrons />
        </Group>
        <Group $grow $pl={3}>
          <Combo icon="rect" v="二维" w={60} name="视图模式" />
          <Tool i="cube" t="俯视" menu /><Tool i="orbit" t="动态观察" /><Tool i="local3d" t="局部三维" /><Sep />
          <Tool i="full" t="全屏" /><Tool i="zoom" t="缩放" menu /><Tool i="pan" t="平移" menu $mr={6} />
          <Tool i="screenrot" t="屏幕旋转" menu tight /><Sep /><Tool i="floors" t="选择楼层" /><Chevrons />
        </Group>
      </Bar>

      <Body>
        <Nav>
          <NavHead>
            <span>模块导航栏</span>
            <T w={9} vb="0 0 9 9">{L("M2.500 0v5M5.500 0v5M2 .5h4M1 5.500h7M4.500 6v3", "#000", 1.200)}</T>
            <T w={9} vb="0 0 9 9">{L("M1 1l7 7M8 1L1 8", "#000")}</T>
          </NavHead>
          <NavBtn>工程设置</NavBtn>
          <NavBtn>绘图输入</NavBtn>
          <NavTools>
            <T w={17} vb="0 0 17 17">{L("M5 1v8M1 5h8M12 8v8M8 12h8", "#111", 3)}{L("M5 2v6M2 5h6M12 9v6M9 12h6", "#2aa8a0", 1)}</T>
            <T w={17} vb="0 0 17 17">{L("M0 4.500h9M7 11.500h9", "#111", 3)}{L("M1 4.500h7M8 11.500h7", "#2aa8a0", 1)}</T>
          </NavTools>
          <TreeBox>
            <TreeList>{TREE.map((r, i) => <TreeRow key={i} row={r} />)}</TreeList>
            <VScroll><Chevron d={UP} /><Chevron d={DOWN} /></VScroll>
          </TreeBox>
          <NavBtn>单构件输入</NavBtn>
          <NavBtn>报表预览</NavBtn>
        </Nav>

        <Work>
          <Bar $h={25} $pl={1}>
            <Group>
              <Grip $mr={4} />
              <Tool i="brush" t="删除" /><Sep /><Tool i="copy" t="复制" /><Tool i="mirror" t="镜像" /><Sep />
              <Tool i="move" t="移动" /><Tool i="rotate" t="旋转" /><Sep /><Tool i="extend" t="延伸" /><Tool i="trim" t="修剪" /><Sep />
              <Tool i="breakI" t="打断" /><Tool i="merge" t="合并" /><Tool i="splitG" t="分割" disabled /><Sep />
              <Tool i="align" t="对齐" menu tight /><Tool i="offset" t="偏移" /><Tool i="stretch" t="拉伸" /><Sep />
              <Tool i="gripG" t="设置夹点" disabled $mr={4} />
            </Group>
          </Bar>
          <Bar $h={25} $mb={4} $pl={1}>
            <Group>
              <Grip $mr={2} />
              <Combo v="首层" w={57} name="楼层" /><Combo v="梁" w={69} name="构件类别" /><Combo v="梁" w={69} name="构件类型" />
              <Combo v="雨篷梁-1" w={69} name="构件" /><Combo v="分层1" w={69} name="分层" />
              <Sep $mr={7} />
              <Tool i="prop" t="属性" /><Tool i="editbar" t="编辑钢筋" /><Tool i="list" t="构件列表" /><Tool i="picker" t="拾取构件" $mr={4} />
            </Group>
            <Group>
              <Grip $mr={4} />
              <Tool i="two" t="两点" /><Tool i="para" t="平行" /><Tool i="angle" t="点角" menu $mr={6} /><Tool i="arcaxis" t="三点辅轴" menu $mr={6} />
              <Tool i="brush" t="删除辅轴" /><Tool i="dim" t="尺寸标注" menu $mr={3} />
            </Group>
          </Bar>
          <Bar $h={24} $pl={413}>
            <Group $w={31}><Grip /></Group>
          </Bar>
          <Bar $mb={0} $pl={1}>
            <Group $grow>
              <Grip $mr={4} />
              <Tool i="cursor" t="选择" menu /><Sep /><Tool i="line" t="直线" /><Tool i="addlen" t="点加长度" /><Tool i="arc3" t="三点画弧" menu $mr={4} />
              <Combo v="" w={55} name="画弧方式" />
              <Tool i="rect" t="矩形" /><Sep /><Tool i="smart" t="智能布置" menu tight /><Sep />
              <Tool i="modseg" t="修改梁段属性" /><Tool i="inplace" t="原位标注" $on $mr={0} /><Tool menu $mr={3} aria-label="原位标注选项" />
              <Tool i="respan" t="重提梁跨" menu $mr={6} /><Tool i="copyspan" t="梁跨数据复制" menu $mr={6} />
              <Tool i="batchid" t="批量识别梁支座" /><Tool i="applyto" t="应用到同名梁" /><Chevrons />
            </Group>
          </Bar>

          <Canvas><Drawing /></Canvas>

          <Bar $h={26} $mb={6} $pl={214}>
            <Group $pl={1}>
              <Grip />
              <Tool i="cross" t="交点" /><Tool i="perp" t="垂点" $on $mr={4} /><Tool i="mid" t="中点" $on $mr={4} />
              <Tool i="vertex" t="顶点" /><Tool i="coord" t="坐标" $mr={6} />
            </Group>
            <Group $pl={2} $pr={2}>
              <Grip $mr={2} />
              <Combo v="不偏移" w={58} name="偏移方式" plain /><Sep $mr={3} />
              <Muted $mr={5}>X=</Muted><Spin v="0" w={59} name="X" /><Muted $mr={5}>mm</Muted>
              <Muted $mr={3}>Y=</Muted><Spin v="0" w={59} name="Y" /><Muted $mr={4}>mm</Muted><Sep $mr={2} />
              <CheckLabel><input type="checkbox" />旋转</CheckLabel>
              <Spin v="0.000" w={68} name="旋转角度" /><Muted $mr={0}>°</Muted>
            </Group>
          </Bar>

          <Panel>
            <Gutter><T w={11} vb="0 0 11 11">{R(0.5, 0.5, 10, 10, "#eee", "#888")}{L("M2 2l7 7M9 2L2 9", "#222", 1.300)}</T></Gutter>
            <PanelMain>
              <Bar $h={26} $mb={0}>
                <Group $grow $pl={5}>
                  <Tool i="copydoc" t="复制跨数据" /><Tool i="paste" t="粘贴跨数据" disabled $mr={9} />
                  {["输入当前列数据", "删除当前列数据", "页面设置", "调换起始跨", "悬臂钢筋代号"].map((t) => <Tool key={t} t={t} $mr={10} />)}
                </Group>
              </Bar>
              <Sheet>
                <SpanTable />
                <HScroll><Chevron d={LEFT} /><Thumb /><Chevron d={RIGHT} /></HScroll>
              </Sheet>
            </PanelMain>
            <RedBox />
          </Panel>
        </Work>
      </Body>

      <Status>
        <Cell $w={148} $mono>X=42724 Y=3204</Cell><Cell $w={78}>层高:4.5m</Cell><Cell $w={99}>底标高:-0.05m</Cell><Cell $w={48} $mono>1(1)</Cell>
        <Cell>按鼠标左键选择梁图元,按右键或ESC退出;可以通过回车键及shift+"→←↑"光标键在跨之间、上下输入框之间进行切换</Cell>
        <Cell $w={69} $mono>224.6 FPS</Cell>
      </Status>

      <TaskBar>
        <TaskBtn $w={48} aria-label="开始"><T w={16} vb="0 0 16 16">{F("M0 2l7-1v6.500H0zM8 1l8-1v7.500H8zM0 8.500h7V15l-7-1zM8 8.500h8V16l-8-1z", "#fff")}</T></TaskBtn>
        <Search>
          <T w={22}>{C(12, 12, 9.500, "none", "#111")}{L("M12 2.500a9.500 9.500 0 1 0 .1 0z", "#111", 3)}</T>
          <input placeholder="在这里输入你要搜索的内容" aria-label="搜索" />
          <T w={14} h={18} vb="0 0 14 18">{L("M4.500 3.500a2.500 2.500 0 0 1 5 0v5a2.500 2.500 0 0 1-5 0zM2 8v1a5 5 0 0 0 10 0V8M7 14v4M4 17.500h6", "#333", 1.200)}</T>
        </Search>
        <TaskBtn $w={50} aria-label="任务视图"><T w={18}>{L("M2 2v4h13V2M2 22v-4h13v4M2 9.500h13v5H2zM20 2v20M18 10h4", "#fff", 1.600)}</T></TaskBtn>
        <TaskBtn $w={50} aria-label="四叶草"><T w={24}>{F("M11.500 11.500C5 13 2 10 2 7c0-4 5-5 8-4 3 2 2 5 1.500 8.500zM12.500 11C11 6 13 2 17 2c5 0 6 6 3 8-2 1-5 0-7.500 1zM12.500 12.500C19 11 22 14 22 17c0 4-5 5-8 4-3-2-2-5-1.500-8.500zM11.500 13C13 18 11 22 7 22c-5 0-6-6-3-8 2-1 5 0 7.500-1z", "#e8eeee")}</T></TaskBtn>
        <TaskBtn $w={52} aria-label="浏览器"><T w={24}>{L("M5 13h15c1-12-15-12-15 0 0 9 11 9 14 3M3 21c-4-4 8-19 17-17", "#eee", 2.600)}</T></TaskBtn>
        <TaskBtn $w={50} aria-label="通知程序">
          <T w={28} vb="0 0 28 28">{L("M19 8a9 9 0 1 0 1 11M16 12a4.500 4.500 0 1 0 1 6h-5M8 24c6 3 13-1 13-7", "#c8d0d0", 1.800)}{F("M21 1a4 4 0 0 1 4 4v5l2 2H15l2-2V5a4 4 0 0 1 4-4zM19 13h4l-2 2z", "#f2b020")}</T>
        </TaskBtn>
        <Rule $ml={8} />
        <TaskBtn $w={40} $ml={17} $run aria-label="广联达">
          <T w={26}>{L("M19 6C14 0 4 3 4 12s11 12 15 5c1-2 1-4 0-5h-6", "#2d9cf0", 4.500)}{F("M11 9h12l-3 9z", "#4ab4fa")}</T>
        </TaskBtn>
        <TaskBtn $w={40} $ml={9} $run aria-label="钢筋算量"><T w={26}><rect width="24" height="24" rx="5" fill="#1090fa" />{L("M12 5v14M6 12a6 6 0 0 0 12 0M7 12h11M12 5h4", "#fff", 2.200)}</T></TaskBtn>
        <TaskBtn $w={40} $ml={8} $run aria-label="记事"><T w={26}>{R(0, 0, 24, 24, "#f49a1a")}{F("M4 4h14v16H4z", "#fff8e0")}{L("M6 8h9M6 11h7M6 14h5", "#c8862a")}{F("M11 18l2-6 8-9 2 2-8 9z", "#c45a10")}</T></TaskBtn>
        <Pager><Chevron d={UP} /><Chevron d={DOWN} /></Pager>
        <Tray>
          <Rule $ml={14} />
          <Stack $w={28} $ml={8}>链接</Stack>
          <Slot $w={60} aria-label="人脉"><T w={17}>{C(9, 9, 4, "none", "#fff")}{C(18, 5, 3, "none", "#fff")}{L("M1 22c2-10 13-10 14 0M14 11c4-3 8 0 9 4", "#fff", 1.800)}</T></Slot>
          <Stack $w={56} $ml={5}>31%<br />CPU使用</Stack>
          <Slot $w={38} aria-label="展开"><T w={13}>{L("M2 17l10-10 10 10", "#fff", 2)}</T></Slot>
          <Slot $w={16} aria-label="提醒"><T w={15}>{F("M12 1a8 8 0 0 1 7 8v7l3 3H2l3-3V9a8 8 0 0 1 7-8zM9 20h6l-3 3z", "#fff")}</T></Slot>
          <Slot $w={32} aria-label="电源"><T w={16}>{L("M7 7h15v11H7zM1 3h6v6H1zM4 9v6h3", "#fff", 1.800)}</T></Slot>
          <Slot $w={20} aria-label="网络"><T w={15}>{L("M2 22C2 10 10 2 22 2M8 22c0-8 6-14 14-14M14 22c0-5 3-8 8-8", "#ddd", 2)}{C(20, 20, 2, "#fff")}</T></Slot>
          <Slot $w={24} aria-label="音量"><T w={17}>{L("M2 9h4l6-5v16l-6-5H2zM15 8c3 3 3 6 0 9M18 5c5 5 5 10 0 15", "#fff", 1.600)}</T></Slot>
          <Slot $w={32} aria-label="键盘"><T w={23} h={14} vb="0 0 23 14">{L("M.5.5h22v13H.5zM3 3.500h17M3 6.500h17M6 10.500h11", "#fff", 1)}{L("M5.500 2v6M8.500 2v6M11.500 2v6M14.500 2v6M17.500 2v6", "#07191d")}</T></Slot>
          <Slot $w={25}>A</Slot>
          <Slot $w={32} aria-label="输入法"><T w={17}>{F("M3 3l18-2 2 18-18 4z", "#f04a20")}{L("M17 7c-6-3-10 1-7 4s9 2 6 6-8 2-10 0", "#fff", 2.500)}</T></Slot>
          <Stack $w={64} $ml={7}>14:05<br />2018/9/13</Stack>
          <Slot $w={57} aria-label="操作中心"><T w={26} vb="0 0 26 26">{F("M2 3h16v13H9l-3 3v-3H2z", "#fff")}{L("M5 6.500h10M5 9.500h10M5 12.500h7", "#07191d")}<circle cx="18" cy="18" r="7.500" fill="#4a5558" stroke="#9aa" /><text x="18" y="22" fontSize="11" textAnchor="middle" fill="#fff">1</text></T></Slot>
        </Tray>
      </TaskBar>
    </Page>
  );
}
